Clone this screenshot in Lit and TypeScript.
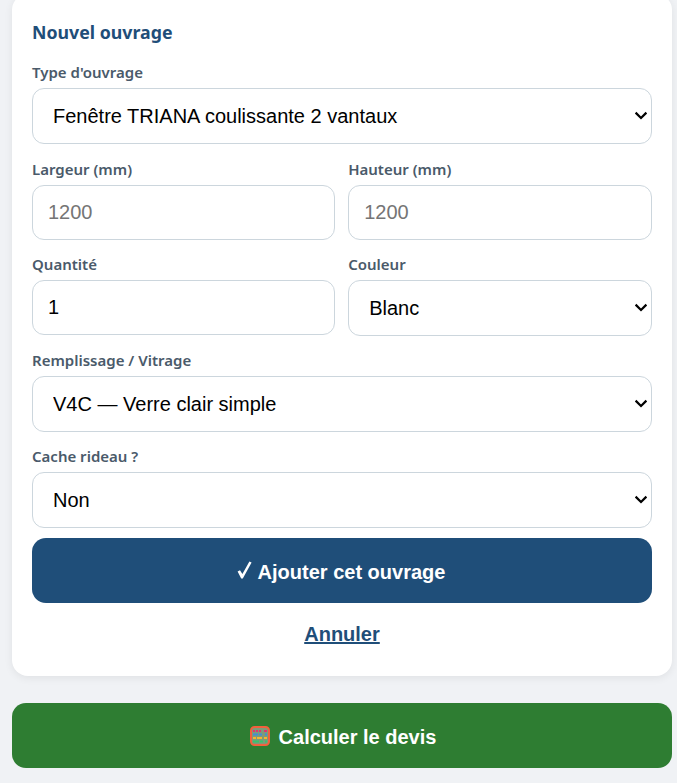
import { LitElement, html, css, unsafeCSS } from "lit";
import { customElement } from "lit/decorators.js";

const arrow = "url(\"data:image/svg+xml,%3Csvg xmlns='http://www.w3.org/2000/svg' width='14' height='9' viewBox='0 0 14 9'%3E%3Cpath d='M1.6 1.6 7 7l5.4-5.4' fill='none' stroke='%23000' stroke-width='2.2'/%3E%3C/svg%3E\")";

@customElement("app-root")
export class AppRoot extends LitElement {
  static styles = css`
    :host { display: block; background: #f0f2f5; height: 783px; overflow: hidden; font-family: "Liberation Sans", Arial, sans-serif; }
    .page { display: flex; flex-direction: column; gap: 27px; width: 660px; margin: -6px 0 0 12px; }
    .card { background: #fff; border-radius: 16px; padding: 26px 20px 20px; box-shadow: 0 2px 8px rgba(0,0,0,.07); display: flex; flex-direction: column; }
    h2 { margin: 0 0 4px; font: 700 17.75px/24px "Noto Sans", sans-serif; color: #1f4e79; }
    .field { display: flex; flex-direction: column; min-width: 0; }
    .first { margin-bottom: 1px; }
    label { font: 600 15px/20px "Noto Sans", sans-serif; color: #4a5a6a; margin: 13.6px 0 6.4px; }
    select, input { box-sizing: border-box; width: 100%; border: 1px solid #ccd6dd; border-radius: 12px; background-color: #fff; font: 400 20px "Liberation Sans", Arial, sans-serif; color: #000; outline: none; margin: 0; }
    select { height: 56px; padding: 0 20px; appearance: none; background-repeat: no-repeat; background-position: right 3px center; background-image: ${unsafeCSS(arrow)}; }
    input { height: 55px; padding: 0 15px; }
    input::placeholder { color: #757575; opacity: 1; }
    .row { display: grid; grid-template-columns: minmax(0, 303.4fr) minmax(0, 303.8fr); gap: 12.8px; }
    button { display: flex; align-items: center; justify-content: center; width: 100%; height: 65px; border: 0; border-radius: 14px; color: #fff; font: 700 20px "Liberation Sans", Arial, sans-serif; margin: 0; padding: 4px 0 0; }
    .add { background: #1f4e79; gap: 6px; margin-top: 10px; }
    .calc { background: #2e7d32; gap: 9px; }
    .cancel { align-self: center; margin: 18px 0 8px; font: 700 20px/27px "Liberation Sans", Arial, sans-serif; color: #1f4e79; text-decoration: underline; background: none; }
    svg { display: block; }
    .abacus { margin: -2px 0 0 2px; }
    .tick { margin: -4px 0 0 -2px; }
  `;

  render() {
    return html`
      <div class="page">
        <section class="card">
          <h2>Nouvel ouvrage</h2>
          <div class="field first">
            <label>Type d'ouvrage</label>
            <select><option>Fenêtre TRIANA coulissante 2 vantaux</option></select>
          </div>
          <div class="row">
            <div class="field"><label>Largeur (mm)</label><input type="text" placeholder="1200" /></div>
            <div class="field"><label>Hauteur (mm)</label><input type="text" placeholder="1200" /></div>
          </div>
          <div class="row">
            <div class="field"><label>Quantité</label><input type="text" value="1" /></div>
            <div class="field"><label>Couleur</label><select><option>Blanc</option></select></div>
          </div>
          <div class="field">
            <label>Remplissage / Vitrage</label>
            <select><option>V4C — Verre clair simple</option></select>
          </div>
          <div class="field">
            <label>Cache rideau ?</label>
            <select><option>Non</option></select>
          </div>
          <button class="add">
            <svg class="tick" width="15" height="18" viewBox="0 0 15 18" aria-hidden="true">
              <path d="M.6 10.6 4.2 17.6h1.6L14.6 1.4 12.4.6 5.4 13 3 9.2Z" fill="#fff"/>
            </svg>
            Ajouter cet ouvrage
          </button>
          <a class="cancel">Annuler</a>
        </section>
        <button class="calc">
          <svg class="abacus" width="20" height="20" viewBox="0 0 20 20" aria-hidden="true">
            <rect x="1" y="1" width="18" height="18" rx="3.5" fill="#7f9a78" stroke="#f2603c" stroke-width="2"/>
            <g fill="#e0356f"><rect x="3" y="4" width="2" height="2"/><rect x="6" y="4" width="2" height="2"/><rect x="9" y="4" width="2" height="2"/><rect x="14" y="4" width="3" height="2"/></g>
            <g fill="#3f8fd8"><rect x="3" y="7.5" width="5" height="2"/><rect x="9" y="7.5" width="3" height="2"/><rect x="15" y="7.5" width="2" height="2"/></g>
            <g fill="#f5b52e"><rect x="3" y="11" width="3" height="2"/><rect x="7" y="11" width="5" height="2"/><rect x="14" y="11" width="3" height="2"/></g>
            <g fill="#35c46f"><rect x="3" y="14.5" width="6" height="2"/><rect x="10" y="14.5" width="3" height="2"/><rect x="15" y="14.5" width="2" height="2"/></g>
          </svg>
          Calculer le devis
        </button>
      </div>
    `;
  }
}
